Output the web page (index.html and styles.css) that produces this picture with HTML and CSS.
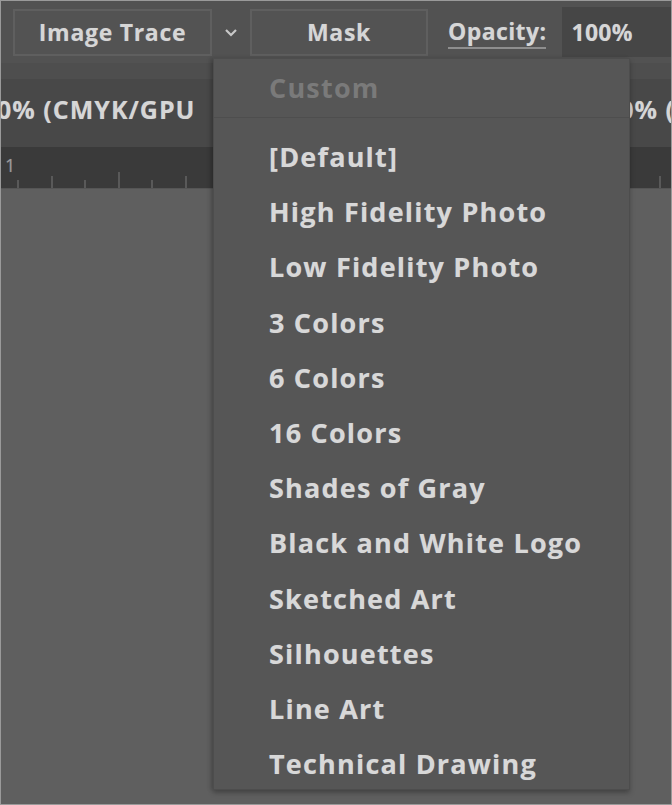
FILE: index.html
```html
<!DOCTYPE html>
<html>
<head>
<meta charset="utf-8">
<link rel="stylesheet" href="styles.css">
</head>
<body>
<div class="frame">
  <div class="toolbar">
    <div class="btn btn-trace">Image Trace</div>
    <div class="chev">
      <svg width="14" height="10" viewBox="0 0 14 10"><path d="M2 2 L7 7 L12 2" fill="none" stroke="#c8c8c8" stroke-width="2.2"/></svg>
    </div>
    <div class="btn btn-mask">Mask</div>
    <div class="opacity">Opacity:</div>
    <div class="input">100%</div>
  </div>
  <div class="tabs">
    <div class="tabs-top"></div>
    <div class="tabs-row">
      <div class="tab tab-left">0% (CMYK/GPU</div>
      <div class="tab tab-right">0% (</div>
    </div>
  </div>
  <div class="ruler">
    <div class="ruler-num">1</div>
    <div class="ticks">
      <span class="tick t-s"></span>
      <span class="tick t-m"></span>
      <span class="tick t-s"></span>
      <span class="tick t-l"></span>
      <span class="tick t-s"></span>
      <span class="tick t-m"></span>
    </div>
    <div class="ticks-right"><span class="tick t-m"></span></div>
  </div>
  <div class="canvas"></div>

  <div class="menu">
    <div class="item disabled">Custom</div>
    <div class="sep"></div>
    <div class="item">[Default]</div>
    <div class="item">High Fidelity Photo</div>
    <div class="item">Low Fidelity Photo</div>
    <div class="item">3 Colors</div>
    <div class="item">6 Colors</div>
    <div class="item">16 Colors</div>
    <div class="item">Shades of Gray</div>
    <div class="item">Black and White Logo</div>
    <div class="item">Sketched Art</div>
    <div class="item">Silhouettes</div>
    <div class="item">Line Art</div>
    <div class="item">Technical Drawing</div>
  </div>
</div>
</body>
</html>
```
FILE: styles.css
```css
html, body {
  margin: 0;
  padding: 0;
  background: #5f5f5f;
}
.frame {
  width: 672px;
  height: 805px;
  box-sizing: border-box;
  border: 1px solid #9a9a9a;
  position: relative;
  overflow: hidden;
  background: #5f5f5f;
  display: flex;
  flex-direction: column;
  font-family: "Open Sans", "Noto Sans", sans-serif;
  font-weight: 700;
  color: #d6d6d6;
  text-shadow: 0 0 1px rgba(200, 210, 230, 0.35);
}
.toolbar {
  height: 62px;
  flex: none;
  display: flex;
  align-items: center;
  padding-left: 12px;
  background: #525252;
  font-size: 23px;
  letter-spacing: 0.7px;
}
.btn {
  height: 47px;
  box-sizing: border-box;
  border: 2px solid #5f5f5f;
  background: #535353;
  display: flex;
  align-items: center;
  justify-content: center;
}
.btn-trace { width: 199px; }
.chev {
  width: 38px;
  display: flex;
  justify-content: center;
  align-items: center;
  padding-top: 2px;
}
.btn-mask { width: 178px; }
.opacity {
  margin-left: 20px;
  padding-bottom: 1px;
  border-bottom: 2px solid #8e8e8e;
  line-height: 30px;
  letter-spacing: 0.4px;
}
.input {
  margin-left: 16px;
  flex: 1;
  height: 50px;
  background: #464646;
  display: flex;
  align-items: center;
  padding-left: 9px;
  letter-spacing: 0.3px;
}
.tabs {
  flex: none;
  height: 84px;
  display: flex;
  flex-direction: column;
}
.tabs-top {
  height: 16px;
  background: #4e4e4e;
}
.tabs-row {
  flex: 1;
  background: #484848;
  display: flex;
  align-items: center;
  font-size: 25px;
  letter-spacing: 1px;
  white-space: nowrap;
  padding-bottom: 8px;
}
.tab-left {
  margin-left: -4px;
}
.tab-right {
  margin-left: auto;
  margin-right: -4px;
}
.ruler {
  flex: none;
  height: 41px;
  background: #3a3a3a;
  display: flex;
  align-items: flex-end;
  position: relative;
  border-bottom: 1px solid #555;
}
.ruler-num {
  position: absolute;
  left: 4px;
  top: 6px;
  font-size: 18px;
  color: #9a9a9a;
  font-weight: 400;
}
.ticks {
  display: flex;
  align-items: flex-end;
  gap: 31.5px;
  padding-left: 16px;
}
.ticks-right {
  margin-left: auto;
  margin-right: 10px;
  display: flex;
  align-items: flex-end;
}
.tick {
  width: 2px;
  background: #595959;
}
.t-s { height: 8px; }
.t-m { height: 12px; }
.t-l { height: 16px; }
.canvas {
  flex: 1;
  background: #5f5f5f;
}
.menu {
  position: absolute;
  left: 212px;
  top: 57px;
  width: 417px;
  height: 732px;
  box-sizing: border-box;
  background: #565656;
  border: 1px solid #4d4d4d;
  box-shadow: 0 3px 5px rgba(0, 0, 0, 0.25), -3px 0 4px rgba(0, 0, 0, 0.12);
  padding-top: 1px;
  font-size: 27px;
  letter-spacing: 1.2px;
}
.item {
  height: 55.2px;
  line-height: 55.2px;
  padding-left: 55px;
  white-space: nowrap;
  color: #d8d8d8;
}
.item.disabled {
  color: #7a7a7a;
  text-shadow: none;
  height: 55px;
  line-height: 55px;
}
.sep {
  height: 1px;
  background: #4e4e4e;
  margin: 2px 0 11px;
}
```
